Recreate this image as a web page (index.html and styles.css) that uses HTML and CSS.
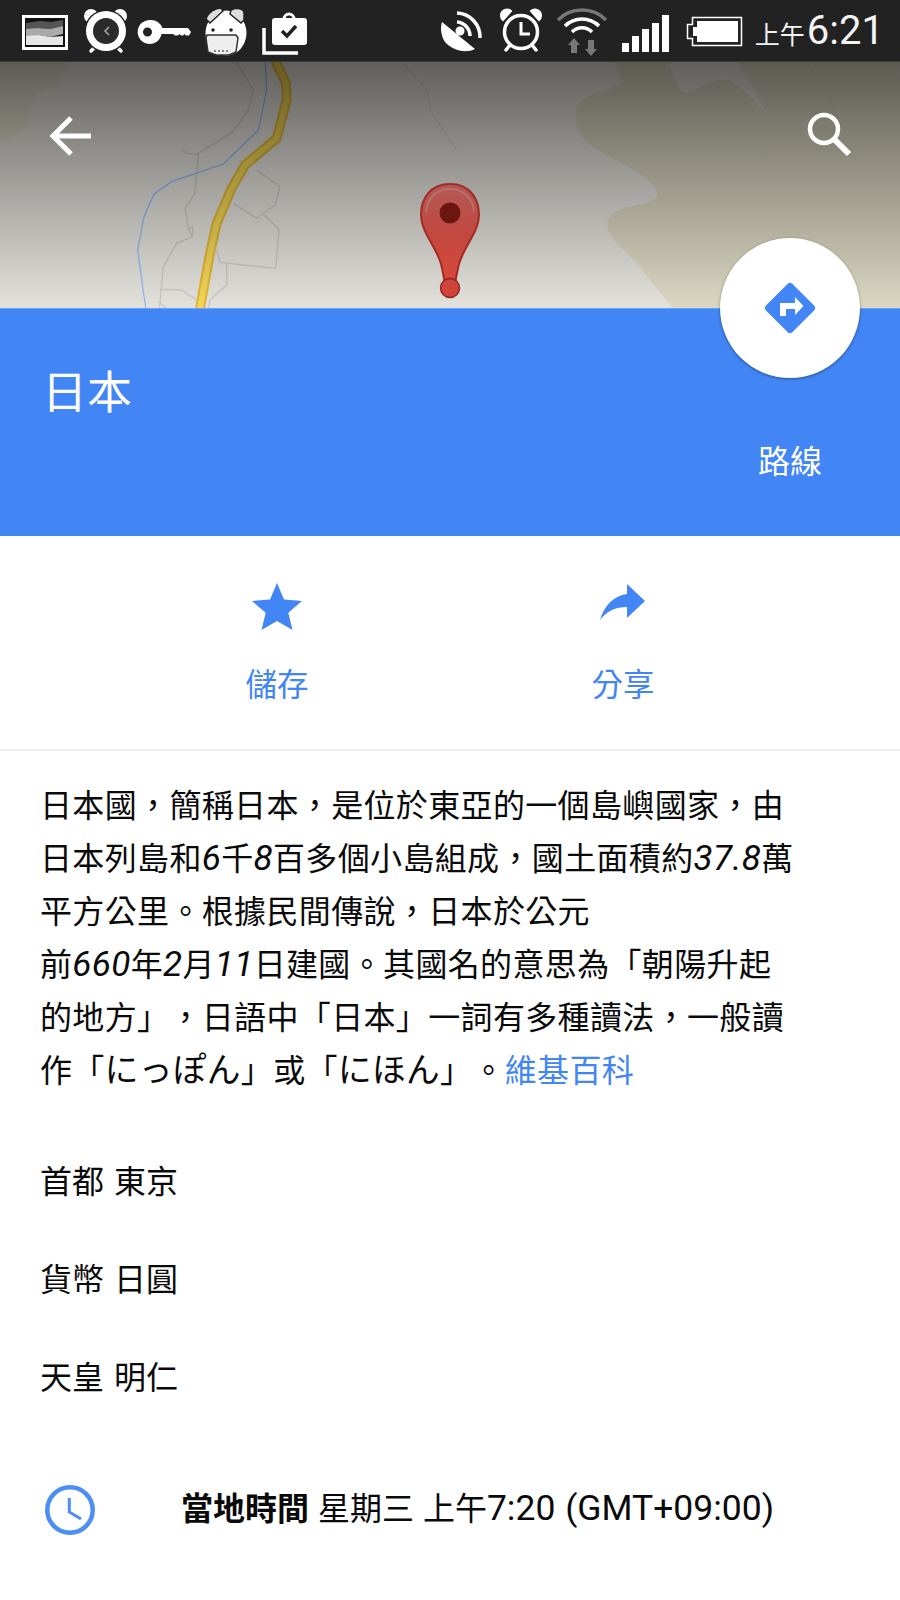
FILE: index.html
```html
<!DOCTYPE html>
<html lang="zh-Hant">
<head>
    <meta charset="UTF-8">
    <meta name="viewport" content="width=device-width, initial-scale=1.0">
    <title>日本</title>
    <link rel="stylesheet" href="styles.css">
</head>
<body>
    <div class="status-bar">
        <div class="status-group">
            <svg class="status-icon" width="58" height="62" viewBox="18 0 58 62">
                <rect x="23.5" y="16.5" width="43" height="32" fill="#111" stroke="#fff" stroke-width="3"/>
                <path d="M26 23l14-2 11 1 12-2v6l-13 3-12-1-12 3z" fill="#555"/>
                <path d="M26 29l12-1 12 1 13-3v8l-13 3-11-2-13 3z" fill="#aaa"/>
                <path d="M26 36l13-1 11 2 13-1v9H26z" fill="#e6e6e6"/>
            </svg>
            <svg class="status-icon" width="58" height="62" viewBox="76 0 58 62">
                <circle cx="91" cy="16" r="7" fill="#fff"/>
                <circle cx="120" cy="16" r="7" fill="#fff"/>
                <path d="M95 47l-4 4M117 47l4 4" stroke="#fff" stroke-width="3.5" stroke-linecap="round"/>
                <circle cx="106" cy="31" r="21.5" fill="#222"/>
                <circle cx="106" cy="31" r="20" fill="#fff"/>
                <circle cx="106" cy="31" r="13" fill="#2b2b2b"/>
                <path d="M109 27l-4 4 4 4" fill="none" stroke="#aaa" stroke-width="1.5"/>
            </svg>
            <svg class="status-icon" width="64" height="62" viewBox="134 0 64 62">
                <path fill="#fff" fill-rule="evenodd" d="M151 20a12 12 0 0 1 11.500 8H188l3 4-2 3.500h-3l-1.500-1.500-1.500 1.500h-2l-1.500-1.500-1.500 1.500h-3l-2-1.500h-11.500A12 12 0 1 1 151 20zm-3.500 7.500a4.500 4.500 0 1 0 0 9 4.500 4.500 0 0 0 0-9z"/>
            </svg>
            <svg class="status-icon" width="58" height="62" viewBox="198 0 58 62">
                <ellipse cx="226" cy="33" rx="20.5" ry="22.5" fill="#fff"/>
                <path d="M206 19c2-7 10-11 15-11l2 3-13 12zM231 10c6-3 12-1 13 2v8l-3 3-11-9z" fill="#ddd" stroke="#222" stroke-width="1.5"/>
                <circle cx="213" cy="30" r="1.8" fill="#222"/>
                <circle cx="231" cy="30" r="1.8" fill="#222"/>
                <path d="M207 35h29l2 3-2 14-7 3h-13l-8-3-2-14z" fill="#eee" stroke="#333" stroke-width="1.5"/>
                <path d="M214 51h16" stroke="#666" stroke-width="1.5" stroke-dasharray="2 2"/>
            </svg>
            <svg class="status-icon" width="56" height="62" viewBox="256 0 56 62">
                <path d="M264 28v25h34" fill="none" stroke="#fff" stroke-width="3.5"/>
                <path d="M284 19a5 5 0 0 1 10 0" fill="none" stroke="#fff" stroke-width="3"/>
                <rect x="272" y="18" width="35" height="27" rx="3" fill="#fff"/>
                <path d="M282 31l5 5 9-10" fill="none" stroke="#222" stroke-width="3.5"/>
            </svg>
        </div>
        <div class="status-group">
            <svg class="status-icon" width="52" height="62" viewBox="436 0 52 62">
                <path d="M442 22L475 49C465 54 452 50 445 42 441 36 440 28 442 22z" fill="#fff"/>
                <circle cx="460" cy="31" r="4.5" fill="#fff"/>
                <path d="M457 22a14 14 0 0 1 13 14" fill="none" stroke="#fff" stroke-width="3.5"/>
                <path d="M457 13a24 24 0 0 1 23 25" fill="none" stroke="#fff" stroke-width="3.5"/>
            </svg>
            <svg class="status-icon" width="64" height="62" viewBox="488 0 64 62">
                <path d="M503 20a6 6 0 0 1 8-9zM539 20a6 6 0 0 0-8-9z" fill="#fff" stroke="#fff" stroke-width="2"/>
                <circle cx="521" cy="32" r="16.5" fill="none" stroke="#fff" stroke-width="3.5"/>
                <path d="M521 22v12h9" fill="none" stroke="#fff" stroke-width="3"/>
                <path d="M510 45l-4 5M532 45l4 5" stroke="#fff" stroke-width="3.5" stroke-linecap="round"/>
            </svg>
            <svg class="status-icon" width="62" height="62" viewBox="552 0 62 62">
                <path d="M558 20a34 34 0 0 1 48 0" fill="none" stroke="#777" stroke-width="3.5"/>
                <path d="M565 26a24 24 0 0 1 34 0" fill="none" stroke="#fff" stroke-width="3.5"/>
                <path d="M572 32a14 14 0 0 1 20 0" fill="none" stroke="#fff" stroke-width="3.5"/>
                <path d="M574 38l6 7h-3v8h-6v-8h-3zM591 56l-6-7h3v-9h6v9h3z" fill="#777"/>
            </svg>
            <svg class="status-icon" width="64" height="62" viewBox="614 0 64 62">
                <path d="M622 43h7v9h-7zM632 36h7v16h-7zM642 29h7v23h-7zM652 23h7v29h-7zM662 15h7v37h-7z" fill="#fff"/>
            </svg>
            <svg class="status-icon" width="72" height="62" viewBox="678 0 72 62">
                <path d="M692.5 17.500h49v28h-49v-7h-5v-14h5z" fill="none" stroke="#fff" stroke-width="1.5"/>
                <path d="M697 21h41v21h-41v-6h-4v-9h4z" fill="#fff"/>
            </svg>
            <div class="status-time"><span class="status-ampm">上午</span>6:21</div>
        </div>
    </div>

    <div class="map">
        <svg class="map-canvas" width="900" height="246" viewBox="0 0 900 246">
            <defs>
                <linearGradient id="shade" x1="0" y1="0" x2="0" y2="1">
                    <stop offset="0" stop-color="#000" stop-opacity="0.58"/>
                    <stop offset="1" stop-color="#000" stop-opacity="0"/>
                </linearGradient>
                <linearGradient id="pinFill" x1="0" y1="0" x2="0" y2="1">
                    <stop offset="0" stop-color="#b25a58"/>
                    <stop offset="0.5" stop-color="#c2483f"/>
                    <stop offset="1" stop-color="#d9483b"/>
                </linearGradient>
            </defs>
            <rect width="900" height="246" fill="#e4e2dc"/>
            <!-- land and water, in the 3x coordinates of the crops -->
            <g transform="translate(450 -2) scale(0.33333)">
                <path d="M490 0C500 30 520 60 510 75 470 95 390 100 378 150 368 200 400 250 450 275 520 310 620 360 622 400 620 440 530 430 490 460 460 485 470 510 500 550L560 610 680 760H1350V0H860L955 165C900 110 860 60 820 58 770 60 730 100 705 95 680 90 665 40 660 0z" fill="#dbd7c2"/>
            </g>
            <g transform="translate(0 -2) scale(0.33333)">
                <path d="M0 0H205C200 40 190 60 150 85 100 100 95 130 85 190 60 225 30 240 0 245z" fill="#e0ddcc"/>
                <g fill="none" stroke="#c9c9c4" stroke-width="4" stroke-linejoin="round">
                    <path d="M705 0L760 90 745 150 700 215 595 280 585 400 555 445 565 505 578 530 530 550 490 620 478 745"/>
                    <path d="M548 268L555 278 595 285"/>
                    <path d="M770 330L840 380 825 435 770 475 700 430"/>
                    <path d="M790 462L837 508 827 625 660 607 650 570"/>
                    <path d="M680 610L680 675 630 720 625 745"/>
                    <path d="M480 688L545 690 590 720M475 725L500 745"/>
                    <path d="M565 505L578 500 578 530"/>
                </g>
                <g fill="none" stroke="#c9c9c4" stroke-width="2.5" stroke-linejoin="round">
                    <path d="M1200 0L1280 90 1290 150 1370 270"/>
                    <path d="M2410 0L2480 80 2510 170M2660 0L2700 60"/>
                </g>
                <path d="M795 0L800 90 775 210 670 312 515 365 462 402 432 470 413 570 437 745" fill="none" stroke="#8db6fa" stroke-width="3.5" stroke-linejoin="round"/>
                <path d="M825 0L858 70 860 120 830 235 735 315 695 385 650 490 630 580 600 745" fill="none" stroke="#e5b83c" stroke-width="30" stroke-linejoin="round"/>
                <path d="M825 0L858 70 860 120 830 235 735 315 695 385 650 490 630 580 600 745" fill="none" stroke="#f2d755" stroke-width="17" stroke-linejoin="round"/>
            </g>
            <rect width="900" height="246" fill="url(#shade)"/>
            <path d="M450 122C430 122 421 137 421 153 421 170 436 184 441 202 443 210 444 216 445 222H455C456 216 457 210 459 202 464 184 479 170 479 153 479 137 470 122 450 122z" fill="url(#pinFill)" stroke="#a32b24" stroke-width="2"/>
            <path d="M426 150C427 136 437 127 450 127 463 127 473 136 474 150" fill="none" stroke="#bd6f6c" stroke-width="2"/>
            <circle cx="450" cy="151" r="10.5" fill="#6b1610"/>
            <circle cx="450" cy="226" r="9.5" fill="#d0443a" stroke="#8e2a22" stroke-width="1.5"/>
        </svg>
        <button class="map-btn map-back" type="button" aria-label="返回">
            <svg width="44" height="42" viewBox="0 0 44 42">
                <path d="M22 3L4 21 22 39M4 21H42" fill="none" stroke="#fff" stroke-width="5"/>
            </svg>
        </button>
        <button class="map-btn map-search" type="button" aria-label="搜尋">
            <svg width="48" height="48" viewBox="0 0 48 48">
                <circle cx="18" cy="18" r="14" fill="none" stroke="#fff" stroke-width="4.5"/>
                <path d="M28 28L43 43" stroke="#fff" stroke-width="6"/>
            </svg>
        </button>
    </div>

    <div class="hero">
        <h1 class="hero-title">日本</h1>
        <div class="hero-route">路線</div>
        <div class="fab">
            <svg width="52" height="52" viewBox="-26 -26 52 52">
                <path d="M-2-24.500Q0-26 2-24.500L24.500-2Q26 0 24.500 2L2 24.500Q0 26-2 24.500L-24.500 2Q-26 0-24.500-2z" fill="#4285f4"/>
                <path d="M-10 8V-5H5V-11L13.500-2 5 7V1H-4V8z" fill="#fff"/>
            </svg>
        </div>
    </div>

    <div class="actions">
        <div class="action">
            <svg class="action-icon" width="52" height="48" viewBox="0 0 52 48">
                <path d="M26 1l7 16.500 18 1.500-13.700 11.800 4.200 17.200L26 39l-15.500 9 4.200-17.200L1 19l18-1.500z" fill="#4285f4"/>
            </svg>
            <div class="action-label">儲存</div>
        </div>
        <div class="action">
            <svg class="action-icon" width="52" height="48" viewBox="0 0 52 48">
                <path d="M30 2l18 17-18 17V25C18 25 10 29 3 38 7 24 16 14 30 12z" fill="#4285f4"/>
            </svg>
            <div class="action-label">分享</div>
        </div>
    </div>

    <div class="content">
        <p class="summary">日本國，簡稱日本，是位於東亞的一個島嶼國家，由<br>
        日本列島和<i>6</i>千<i>8</i>百多個小島組成，國土面積約<i>37.8</i>萬<br>
        平方公里。根據民間傳說，日本於公元<br>
        前<i>660</i>年<i>2</i>月<i>11</i>日建國。其國名的意思為「朝陽升起<br>
        的地方」，日語中「日本」一詞有多種讀法，一般讀<br>
        作「<span class="kana">にっぽん</span>」或「<span class="kana">にほん</span>」。<a class="link" href="#">維基百科</a></p>

        <div class="facts">
            <div class="fact">首都 東京</div>
            <div class="fact">貨幣 日圓</div>
            <div class="fact">天皇 明仁</div>
        </div>

        <div class="local-time">
            <svg width="50" height="50" viewBox="0 0 50 50">
                <circle cx="25" cy="25" r="22.7" fill="none" stroke="#4d8ef5" stroke-width="4.5"/>
                <path d="M24.300 13V27L36 34" fill="none" stroke="#4d8ef5" stroke-width="3"/>
            </svg>
            <div><b>當地時間</b> 星期三 上午<span class="latin">7:20 (GMT+09:00)</span></div>
        </div>
    </div>
</body>
</html>
```

FILE: styles.css
```css
* {
    box-sizing: border-box;
}
body {
    margin: 0;
    width: 900px;
    height: 1600px;
    overflow: hidden;
    background-color: #fff;
    color: #0a0a0a;
    font-family: Roboto, "Noto Sans CJK TC", sans-serif;
    text-spacing-trim: space-all;
}

/* status bar */
.status-bar {
    display: flex;
    justify-content: space-between;
    height: 62px;
    padding: 0 16px 0 18px;
    background-color: #222;
    border-bottom: 1px solid #3a3a38;
}
.status-group {
    display: flex;
    align-items: flex-start;
}
.status-icon {
    display: block;
    flex: none;
}
.status-time {
    margin-left: 5px;
    color: #f4f4f4;
    font-size: 40px;
    line-height: 62px;
    white-space: nowrap;
}
.status-ampm {
    font-size: 25px;
    margin-right: 2px;
}

/* map header */
.map {
    position: relative;
    height: 246px;
}
.map-canvas {
    display: block;
}
.map-btn {
    position: absolute;
    padding: 0;
    border: none;
    background: none;
}
.map-btn svg {
    display: block;
}
.map-back {
    top: 53px;
    left: 49px;
}
.map-search {
    top: 49px;
    left: 806px;
}

/* blue title block */
.hero {
    position: relative;
    display: flex;
    justify-content: space-between;
    height: 228px;
    padding: 55px 40px 0 42px;
    background-color: #4285f4;
    border-top: 1px solid #6b9ff6;
    color: #fff;
}
.hero-title {
    margin: 0;
    font-size: 45px;
    font-weight: 400;
    line-height: 60px;
}
.hero-route {
    width: 140px;
    margin-top: 78px;
    font-size: 32px;
    line-height: 40px;
    text-align: center;
}
.fab {
    position: absolute;
    top: -71px;
    right: 40px;
    display: flex;
    align-items: center;
    justify-content: center;
    width: 140px;
    height: 140px;
    border-radius: 50%;
    background-color: #fff;
    box-shadow: 0 1px 3px rgba(0, 0, 0, 0.4);
}

/* save and share */
.actions {
    display: grid;
    grid-template-columns: 1fr 1fr;
    height: 215px;
    padding: 46px 104px 0;
    border-bottom: 2px solid #eee;
}
.action {
    display: flex;
    flex-direction: column;
    align-items: center;
    color: #4285f4;
}
.action-icon {
    display: block;
}
.action-label {
    margin-top: 32px;
    font-size: 31.5px;
    line-height: 48px;
}

/* text */
.content {
    padding: 29px 40px 0;
    font-size: 32px;
    line-height: 53px;
}
.summary {
    margin: 0;
    letter-spacing: 0.35px;
    white-space: nowrap;
}
.summary i {
    font-size: 35px;
    line-height: 1;
}
.kana {
    font-size: 33.7px;
    line-height: 1;
}
.link {
    color: #4285f4;
    text-decoration: none;
}
.facts {
    display: flex;
    flex-direction: column;
    gap: 45px;
    margin-top: 58px;
    word-spacing: 2px;
}
.local-time {
    display: flex;
    align-items: center;
    gap: 86px;
    margin-top: 78px;
    padding-left: 5px;
    word-spacing: 1px;
    white-space: nowrap;
}
.local-time svg {
    flex: none;
}
.latin {
    font-size: 35.5px;
    line-height: 1;
}
```
